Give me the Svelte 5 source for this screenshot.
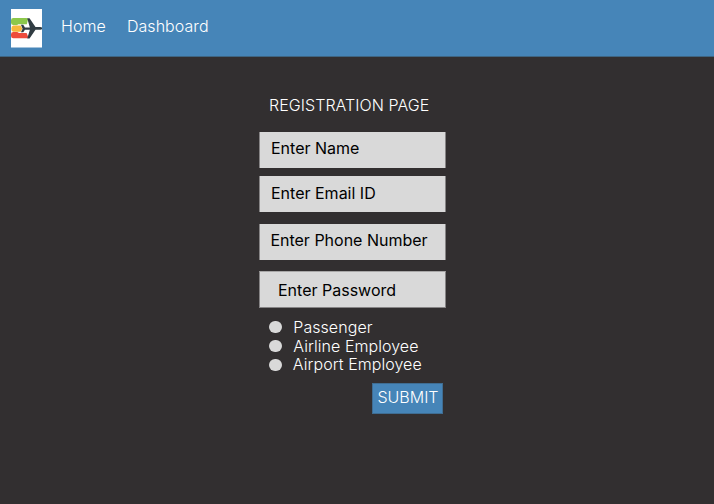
<script>
  const fields = [
    { label: 'Enter Name', id: 'name' },
    { label: 'Enter Email ID', id: 'email' },
    { label: 'Enter Phone Number', id: 'phone' },
    { label: 'Enter Password', id: 'password' }
  ];
  const roles = [
    { label: 'Passenger', id: 'passenger' },
    { label: 'Airline Employee', id: 'airline' },
    { label: 'Airport Employee', id: 'airport' }
  ];
</script>

<div class="page">
  <header>
    <svg class="logo" viewBox="0 0 96 117" preserveAspectRatio="none" aria-label="Logo">
      <rect width="96" height="117" fill="#fff" />
      <path d="M7 27H46Q53 27 51 33L48 46H22Q18 50 13 49H7Q0 49 0 42V34Q0 27 7 27Z" fill="#8cc84b" />
      <path d="M7 50H29L34 60L29 69H7Q1 68 1 60Q1 51 7 50Z" fill="#f6b83c" />
      <path d="M7 70H19L24 73H47L51 82Q53 89 47 89H7Q0 89 0 82V77Q0 70 7 70Z" fill="#ee4c3c" />
      <path d="M30 48H37L42 56H57L49 28H56L74 55H88Q96 56 96 59Q96 62 88 63H74L56 90H49L57 63H42L37 71H30L35 60Z" fill="#303c42" />
    </svg>
    <nav>
      <span>Home</span>
      <span>Dashboard</span>
    </nav>
  </header>

  <main>
    <h1>REGISTRATION PAGE</h1>
    <div class="fields">
      {#each fields as field}
        <div class="field {field.id}"><span>{field.label}</span></div>
      {/each}
    </div>
    <div class="roles">
      {#each roles as role}
        <div class="role {role.id}"><i></i><span>{role.label}</span></div>
      {/each}
    </div>
    <button>SUBMIT</button>
  </main>
</div>

<style>
  :global(body) {
    margin: 0;
    background: #322f30;
  }
  .page {
    height: 504px;
    overflow: hidden;
    background: #322f30;
    color: #fff;
    font: 300 16px/20px Inter, sans-serif;
    letter-spacing: 0.06px;
  }
  header {
    box-sizing: border-box;
    height: 57px;
    display: flex;
    align-items: flex-start;
    padding: 9px 0 0 10.7px;
    background: #4685b8;
    border-bottom: 1px solid #3e6582;
  }
  .logo {
    width: 31.8px;
    height: 38.5px;
    flex: none;
  }
  nav {
    display: flex;
    gap: 21px;
    padding: 7px 0 0 18.6px;
  }
  main {
    width: 187px;
    margin-left: 259px;
    padding-top: 38px;
    display: flex;
    flex-direction: column;
  }
  h1 {
    margin: 0 0 17px 10px;
    font: inherit;
    white-space: nowrap;
  }
  .field {
    box-sizing: border-box;
    height: 36px;
    padding: 6px 0 0 11px;
    background: #d9d9d9;
    border: solid #868485;
    border-width: 0 1px;
    color: #000;
    font-weight: 400;
    letter-spacing: 0;
    white-space: nowrap;
  }
  .email {
    margin-top: 8px;
    padding-top: 7px;
  }
  .phone {
    margin-top: 12px;
    padding-left: 10.4px;
  }
  .password {
    height: 37px;
    margin-top: 11px;
    padding: 8px 0 0 18px;
    border-width: 1px;
    border-top-color: #a8a7a7;
  }
  .roles {
    padding: 9px 0 0 10.2px;
    line-height: 18px;
  }
  .role {
    height: 19px;
    display: flex;
    align-items: center;
    gap: 11.5px;
    white-space: nowrap;
  }
  .role i {
    width: 12.6px;
    height: 12.6px;
    margin-top: 1px;
    border-radius: 50%;
    background: #d9d9d9;
  }
  .airport span {
    margin: -1px 0 0 -0.5px;
  }
  button {
    box-sizing: border-box;
    width: 71px;
    height: 31px;
    margin: 9px 0 0 113px;
    padding: 0 0 4px 1px;
    border: 1px solid #3f6d92;
    background: #4685b8;
    color: #fff;
    font: inherit;
    letter-spacing: 0;
  }
</style>
